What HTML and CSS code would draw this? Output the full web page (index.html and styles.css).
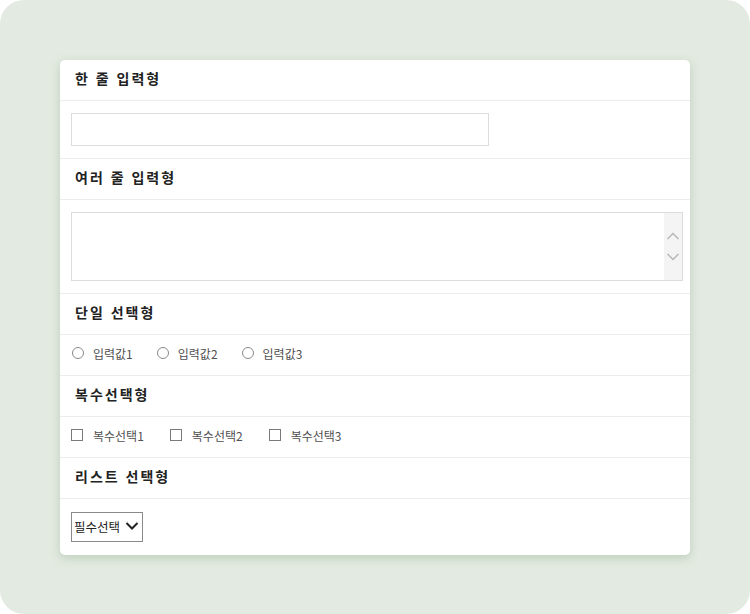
FILE: index.html
```html
<!DOCTYPE html>
<html lang="ko">
<head>
<meta charset="utf-8">
<link rel="stylesheet" href="styles.css">
</head>
<body>
<div class="frame">
  <div class="card">
    <div class="head">한 줄 입력형</div>
    <div class="row row-input"><input class="text-input" type="text"></div>
    <div class="head">여러 줄 입력형</div>
    <div class="row row-area">
      <div class="area">
        <textarea class="area-text"></textarea>
        <div class="scroll">
          <svg width="14" height="10" viewBox="0 0 14 10"><path d="M1.5 8 L7 2.5 L12.5 8" fill="none" stroke="#b8b8b8" stroke-width="1.5"/></svg>
          <svg width="14" height="10" viewBox="0 0 14 10"><path d="M1.5 2 L7 7.5 L12.5 2" fill="none" stroke="#b8b8b8" stroke-width="1.5"/></svg>
        </div>
      </div>
    </div>
    <div class="head">단일 선택형</div>
    <div class="row row-choice">
      <label class="opt opt-radio"><span class="radio"></span>입력값1</label>
      <label class="opt opt-radio"><span class="radio"></span>입력값2</label>
      <label class="opt opt-radio"><span class="radio"></span>입력값3</label>
    </div>
    <div class="head">복수선택형</div>
    <div class="row row-choice">
      <label class="opt opt-check"><span class="check"></span>복수선택1</label>
      <label class="opt opt-check"><span class="check"></span>복수선택2</label>
      <label class="opt opt-check"><span class="check"></span>복수선택3</label>
    </div>
    <div class="head">리스트 선택형</div>
    <div class="row row-select">
      <div class="select">필수선택
        <svg width="14" height="10" viewBox="0 0 14 10"><path d="M1.5 2 L7 7.5 L12.5 2" fill="none" stroke="#222" stroke-width="2"/></svg>
      </div>
    </div>
  </div>
</div>
</body>
</html>
```
FILE: styles.css
```css
* { box-sizing: border-box; }
html, body { margin: 0; padding: 0; background: #ffffff; }
body { font-family: "Noto Sans CJK KR", "Noto Sans", sans-serif; }
.frame {
  width: 750px;
  height: 614px;
  background: #e3eae1;
  border-radius: 24px;
  padding: 60px;
}
.card {
  width: 630px;
  background: #ffffff;
  border-radius: 5px;
  box-shadow: 0 3px 10px rgba(120, 160, 120, 0.35);
  overflow: hidden;
}
.head {
  height: 41px;
  border-bottom: 1px solid #ececec;
  padding-left: 15px;
  padding-bottom: 4px;
  display: flex;
  align-items: center;
  font-size: 14px;
  font-weight: 700;
  color: #222;
  letter-spacing: 2px;
}
.row {
  border-bottom: 1px solid #ececec;
  padding: 0 11px;
}
.row-input { height: 58px; padding-top: 12px; }
.text-input {
  display: block;
  width: 418px;
  height: 33px;
  border: 1px solid #dcdcdc;
  outline: none;
  margin: 0;
}
.row-area { height: 94px; padding-top: 12px; padding-right: 7px; }
.area {
  display: flex;
  height: 69px;
  border: 1px solid #dcdcdc;
}
.area-text {
  flex: 1;
  border: none;
  resize: none;
  outline: none;
  margin: 0;
}
.scroll {
  width: 18px;
  background: #f4f4f4;
  display: flex;
  flex-direction: column;
  align-items: center;
  justify-content: center;
  gap: 11px;
}
.row-choice {
  height: 41px;
  display: flex;
  align-items: center;
  padding-bottom: 4px;
}
.opt {
  display: flex;
  align-items: center;
  font-size: 12px;
  color: #505050;
}
.opt-radio { margin-right: 23px; }
.opt-check { margin-right: 26px; }
.radio {
  width: 12px;
  height: 12px;
  border: 1px solid #8a8a8a;
  border-radius: 50%;
  margin-right: 9px;
  margin-left: 1px;
}
.check {
  width: 12px;
  height: 12px;
  border: 1px solid #7a7a7a;
  margin-right: 10px;
}
.row-select { height: 56px; padding-top: 13px; border-bottom: none; }
.select {
  width: 72px;
  height: 30px;
  border: 1px solid #8a8a8a;
  display: flex;
  align-items: center;
  justify-content: space-between;
  padding: 0 3px 2px 2px;
  font-size: 12.5px;
  color: #222;
}
```
